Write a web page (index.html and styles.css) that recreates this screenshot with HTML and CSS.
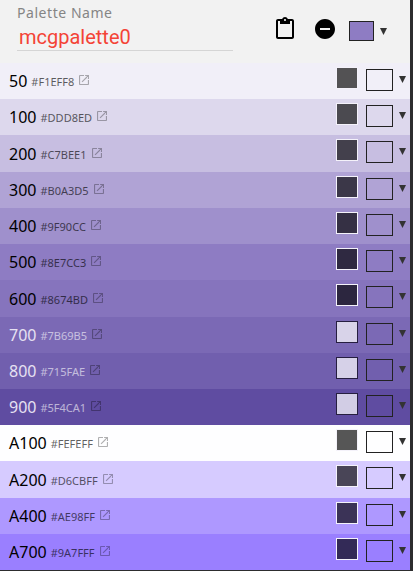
FILE: index.html
```html
<!DOCTYPE html>
<html lang="en">
<head>
  <meta charset="UTF-8" />
  <title>Palette</title>
  <meta name="viewport" content="width=device-width, initial-scale=1" />
  <link rel="stylesheet" href="styles.css">
</head>
<body>
  <div class="palette">
    <header class="toolbar">
      <div class="field">
        <label for="name">Palette Name</label>
        <input type="text" id="name" value="mcgpalette0" spellcheck="false" />
      </div>
      <svg class="icon clipboard" viewBox="0 0 24 24"><path d="M19 2h-4.180C14.400.840 13.300 0 12 0c-1.300 0-2.400.840-2.820 2H5c-1.100 0-2 .900-2 2v16c0 1.100.900 2 2 2h14c1.100 0 2-.900 2-2V4c0-1.100-.900-2-2-2zm-7 0c.550 0 1 .450 1 1s-.450 1-1 1-1-.450-1-1 .450-1 1-1zm7 18H5V4h2v3h10V4h2v16z"/></svg>
      <svg class="icon remove" viewBox="0 0 24 24"><path d="M12 2C6.480 2 2 6.480 2 12s4.480 10 10 10 10-4.480 10-10S17.520 2 12 2zm5 11H7v-2h10v2z"/></svg>
      <span class="base-color"></span>
      <svg class="arrow" viewBox="0 0 7 7"><path d="M0 0h7L3.500 7z"/></svg>
    </header>
    <div id="rows"></div>
  </div>

  <script>
    // name, colour, contrast colour
    const colors = [
      ["50", "#F1EFF8", "#535254"],
      ["100", "#DDD8ED", "#4b4a50"],
      ["200", "#C7BEE1", "#43404c"],
      ["300", "#B0A3D5", "#3b3748"],
      ["400", "#9F90CC", "#353044"],
      ["500", "#8E7CC3", "#2f2941"],
      ["600", "#8674BD", "#2c263f"],
      ["700", "#7B69B5", "#d8d3e9", true],
      ["800", "#715FAE", "#d6d1e8", true],
      ["900", "#5F4CA1", "#d2cde5", true],
      ["A100", "#FEFEFF", "#565656"],
      ["A200", "#D6CBFF", "#494557"],
      ["A400", "#AE98FF", "#3b3357"],
      ["A700", "#9A7FFF", "#332a57"]
    ];

    document.getElementById("rows").innerHTML = colors.map(([name, hex, contrast, light]) => `
      <div class="row${light ? " light" : ""}" style="background:${hex}">
        <span class="shade">${name}</span>
        <span class="hex">${hex}</span>
        <svg class="open" viewBox="3 3 18 18"><path d="M19 19H5V5h7V3H5c-1.110 0-2 .900-2 2v14c0 1.100.890 2 2 2h14c1.100 0 2-.900 2-2v-7h-2v7zM14 3v2h3.590l-9.830 9.830 1.410 1.410L19 6.410V10h2V3h-7z"/></svg>
        <span class="contrast" style="background:${contrast}"></span>
        <span class="picker"></span>
        <svg class="arrow" viewBox="0 0 7 7"><path d="M0 0h7L3.500 7z"/></svg>
      </div>`).join("");
  </script>
</body>
</html>
```

FILE: styles.css
```css
* {
  box-sizing: border-box;
}
body {
  margin: 0;
  height: 571px;
  overflow: hidden;
  background: #2d2d2e;
  font-family: "Noto Sans", sans-serif;
}
.palette {
  width: 410px;
  background: #f2f2f2;
}
.toolbar {
  display: flex;
  align-items: flex-start;
  height: 63px;
  padding-left: 17px;
}
.field {
  width: 216px;
  height: 51px;
  padding-top: 3px;
  border-bottom: 1px solid #d5d5d5;
}
label {
  display: block;
  height: 20px;
  font-size: 14px;
  line-height: 20px;
  letter-spacing: 0.55px;
  color: #858585;
}
input {
  display: block;
  width: 100%;
  height: 27px;
  padding: 0 2px;
  border: none;
  outline: none;
  background: none;
  font-family: Roboto, sans-serif;
  font-size: 20px;
  color: #f44336;
}
.icon {
  width: 24px;
  height: 24px;
  flex: none;
}
.clipboard {
  margin: 17px 0 0 40px;
}
.remove {
  margin: 17px 0 0 16px;
}
.base-color {
  width: 25px;
  height: 20px;
  margin: 21px 6px 0 12px;
  border: 1px solid #222;
  background: #8e7cc3;
}
.arrow {
  width: 7px;
  height: 7px;
  flex: none;
  fill: #333;
}
.toolbar .arrow {
  margin-top: 28px;
}
.row {
  display: flex;
  align-items: flex-start;
  height: 36.22px;
  padding: 0 4px 0 9px;
  color: #000;
}
.shade {
  padding-top: 0.25px;
  font-size: 16px;
  line-height: 36px;
}
.hex {
  padding-top: 0.25px;
  margin-left: 4px;
  font-size: 11px;
  line-height: 37px;
  opacity: 0.62;
}
.open {
  width: 10px;
  height: 10px;
  margin: 12.250px 0 0 5px;
  opacity: 0.3;
}
.contrast {
  width: 22px;
  height: 22px;
  margin: 4px 8px 0 auto;
  border: 1px solid #f4f2fa;
}
.picker {
  width: 27px;
  height: 22px;
  margin: 6px 6px 0 0;
  border: 1px solid #222;
}
.row .arrow {
  margin-top: 13px;
}
.light .shade {
  color: #e6e1f2;
}
.light .hex {
  color: #fff;
  opacity: 0.58;
}
.light .contrast {
  border-color: #261e40;
}
```
